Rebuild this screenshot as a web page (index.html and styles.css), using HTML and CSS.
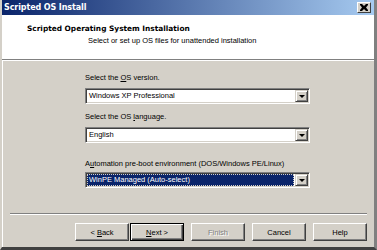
FILE: index.html
```html
<!DOCTYPE html>
<html>
<head>
<meta charset="utf-8">
<link rel="stylesheet" href="styles.css">
</head>
<body>
<div class="window">
  <div class="titlebar">
    <span class="title">Scripted OS Install</span>
    <span class="close"><svg width="8" height="7" viewBox="0 0 8 7"><path d="M0 0h2l2 2 2-2h2v1l-2 2.5 2 2.5v1h-2l-2-2-2 2h-2v-1l2-2.5-2-2.5z" fill="#000"/></svg></span>
  </div>
  <div class="header">
    <div class="h-title">Scripted Operating System Installation</div>
    <div class="h-sub">Select or set up OS files for unattended installation</div>
  </div>
  <div class="body">
    <div class="form">
      <div class="field f1">
        <div class="label">Select the <u>O</u>S version.</div>
        <div class="combo"><span class="val">Windows XP Professional</span><span class="arrow"><i></i></span></div>
      </div>
      <div class="field f2">
        <div class="label">Select the OS <u>l</u>anguage.</div>
        <div class="combo"><span class="val">English</span><span class="arrow"><i></i></span></div>
      </div>
      <div class="field f3">
        <div class="label">A<u>u</u>tomation pre-boot environment (DOS/Windows PE/Linux)</div>
        <div class="combo sel"><span class="val"><b>WinPE Managed (Auto-select)</b></span><span class="arrow"><i></i></span></div>
      </div>
    </div>
    <div class="footer">
      <div class="sep"></div>
      <div class="buttons">
        <span class="btn back"><span>&lt; <u>B</u>ack</span></span>
        <span class="btn def"><span><u>N</u>ext &gt;</span></span>
        <span class="btn dis">Finish</span>
        <span class="btn">Cancel</span>
        <span class="btn">Help</span>
      </div>
    </div>
  </div>
</div>
</body>
</html>
```
FILE: styles.css
```css
html, body { margin: 0; padding: 0; }
body {
  width: 377px; height: 250px; overflow: hidden;
  font-family: "Liberation Sans", Arial, sans-serif;
  font-size: 8px; color: #000; background: #d4d0c8;
}
.window {
  width: 377px; height: 250px; box-sizing: border-box;
  display: flex; flex-direction: column;
  border-left: 2px solid #d4d0c8;
  border-right: 3px solid #808080;
  border-bottom: 3px solid #404040;
  background: #d4d0c8;
  box-shadow: inset 1px 0 0 #fff;
}
.titlebar {
  height: 15px; flex: none;
  background: linear-gradient(to right, #0a246a, #a6caf0);
  display: flex; align-items: center; justify-content: space-between;
  padding: 0 3px 0 2px;
}
.title { color: #fff; font-weight: bold; font-size: 8px; font-family: "DejaVu Sans", sans-serif; letter-spacing: -0.1px; }
.close {
  width: 14px; height: 11px; box-sizing: border-box;
  background: #d4d0c8;
  border: 1px solid; border-color: #fff #404040 #404040 #fff;
  display: flex; align-items: center; justify-content: center;
}
.header {
  height: 45px; flex: none; background: #fff;
  border-bottom: 1px solid #808080;
  padding: 9px 0 0 25px; box-sizing: border-box;
}
.h-title { font-weight: bold; font-size: 7.4px; font-family: "DejaVu Sans", sans-serif; }
.h-sub { margin: 3px 0 0 61px; font-size: 7.5px; }
.body { flex: 1; display: flex; flex-direction: column; border-top: 1px solid #fff; }
.form { padding: 12px 0 0 83px; flex: 1; }
.field { width: 225px; }
.label { font-size: 7.5px; line-height: 10px; }
.f1 .label { height: 15px; }
.f2 { margin-top: 8px; }
.f2 .label { height: 15px; }
.f3 { margin-top: 16px; }
.f3 .label { height: 13px; }
.combo {
  height: 16px; box-sizing: border-box; background: #fff;
  border: 1px solid; border-color: #808080 #fff #fff #808080;
  box-shadow: inset 1px 1px 0 #404040, inset -1px -1px 0 #d4d0c8;
  display: flex; align-items: stretch; padding: 1px;
}
.val { flex: 1; font-size: 7.5px; line-height: 12px; padding-left: 2px; }
.sel .val { padding: 0 1px 0 0; display: flex; }
.sel .val b {
  font-weight: normal; flex: 1; background: #0a246a; color: #fff;
  outline: 1px dotted #d4d0c8; outline-offset: -1px; padding-left: 2px;
}
.arrow {
  width: 13px; flex: none; background: #d4d0c8; box-sizing: border-box;
  border: 1px solid; border-color: #d4d0c8 #404040 #404040 #d4d0c8;
  box-shadow: inset 1px 1px 0 #fff, inset -1px -1px 0 #808080;
  display: flex; align-items: center; justify-content: center;
}
.arrow i {
  width: 0; height: 0; border-left: 3px solid transparent; border-right: 3px solid transparent;
  border-top: 3px solid #000;
}
.footer { flex: none; padding: 0 7px 6px 8px; }
.sep { border-top: 1px solid #808080; border-bottom: 1px solid #fff; }
.buttons { display: flex; justify-content: flex-end; margin-top: 8px; gap: 7px; }
.btn {
  width: 54px; height: 18px; box-sizing: border-box;
  border: 1px solid; border-color: #fff #404040 #404040 #fff;
  box-shadow: inset -1px -1px 0 #808080;
  display: flex; align-items: center; justify-content: center;
  font-size: 7.5px;
}
.btn.back { margin-right: -6px; }
.btn.def { border: 1px solid #000; box-shadow: inset 1px 1px 0 #fff, inset -1px -1px 0 #404040, inset -2px -2px 0 #808080; }
.btn.dis { color: #808080; text-shadow: 1px 1px 0 #fff; }
```
